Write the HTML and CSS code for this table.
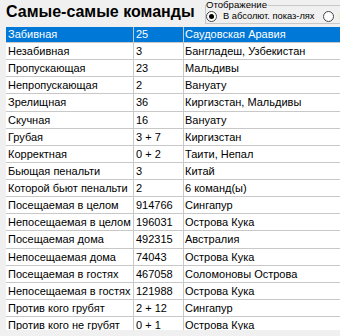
FILE: index.html
```html
<!DOCTYPE html>
<html lang="ru">
<head>
<meta charset="utf-8">
<title>Самые-самые команды</title>
<link rel="stylesheet" href="styles.css">
</head>
<body>
<div class="app">
  <header class="top">
    <h1 class="title">Самые-самые команды</h1>
    <div class="mode" role="radiogroup" aria-label="Отображение">
      <span class="legend">Отображение</span>
      <div class="opts">
        <label class="opt"><span class="radio on"></span>В абсолют. показ-лях</label>
        <label class="opt"><span class="radio"></span>В процентах</label>
      </div>
    </div>
  </header>
  <div class="grid">
    <div class="row sel"><div class="c c1">Забивная</div><div class="c c2">25</div><div class="c c3">Саудовская Аравия</div></div>
    <div class="row"><div class="c c1">Незабивная</div><div class="c c2">3</div><div class="c c3">Бангладеш, Узбекистан</div></div>
    <div class="row"><div class="c c1">Пропускающая</div><div class="c c2">23</div><div class="c c3">Мальдивы</div></div>
    <div class="row"><div class="c c1">Непропускающая</div><div class="c c2">2</div><div class="c c3">Вануату</div></div>
    <div class="row"><div class="c c1">Зрелищная</div><div class="c c2">36</div><div class="c c3">Киргизстан, Мальдивы</div></div>
    <div class="row"><div class="c c1">Скучная</div><div class="c c2">16</div><div class="c c3">Вануату</div></div>
    <div class="row"><div class="c c1">Грубая</div><div class="c c2">3 + 7</div><div class="c c3">Киргизстан</div></div>
    <div class="row"><div class="c c1">Корректная</div><div class="c c2">0 + 2</div><div class="c c3">Таити, Непал</div></div>
    <div class="row"><div class="c c1">Бьющая пенальти</div><div class="c c2">3</div><div class="c c3">Китай</div></div>
    <div class="row"><div class="c c1">Которой бьют пенальти</div><div class="c c2">2</div><div class="c c3">6 команд(ы)</div></div>
    <div class="row"><div class="c c1">Посещаемая в целом</div><div class="c c2">914766</div><div class="c c3">Сингапур</div></div>
    <div class="row"><div class="c c1">Непосещаемая в целом</div><div class="c c2">196031</div><div class="c c3">Острова Кука</div></div>
    <div class="row"><div class="c c1">Посещаемая дома</div><div class="c c2">492315</div><div class="c c3">Австралия</div></div>
    <div class="row"><div class="c c1">Непосещаемая дома</div><div class="c c2">74043</div><div class="c c3">Острова Кука</div></div>
    <div class="row"><div class="c c1">Посещаемая в гостях</div><div class="c c2">467058</div><div class="c c3">Соломоновы Острова</div></div>
    <div class="row"><div class="c c1">Непосещаемая в гостях</div><div class="c c2">121988</div><div class="c c3">Острова Кука</div></div>
    <div class="row"><div class="c c1">Против кого грубят</div><div class="c c2">2 + 12</div><div class="c c3">Сингапур</div></div>
    <div class="row"><div class="c c1">Против кого не грубят</div><div class="c c2">0 + 1</div><div class="c c3">Острова Кука</div></div>
  </div>
</div>
</body>
</html>
```
FILE: styles.css
```css
html, body {
  margin: 0;
  padding: 0;
  background: #f0f0f0;
  width: 340px;
  height: 336px;
  overflow: hidden;
}
body {
  font-family: "Liberation Sans", Arial, sans-serif;
  font-size: 11px;
  color: #000;
}
.app {
  width: 340px;
  height: 336px;
  overflow: hidden;
}
.top {
  display: flex;
  align-items: flex-start;
  height: 27px;
  overflow: hidden;
}
.title {
  margin: 0;
  padding: 3px 0 0 6px;
  flex: 0 0 205px;
  box-sizing: border-box;
  font-size: 16px;
  line-height: 18px;
  font-weight: bold;
  white-space: nowrap;
}
.mode {
  position: relative;
  flex: none;
  width: 220px;
  height: 19px;
  margin-top: 5px;
  box-sizing: border-box;
  border: 1px solid #c8c8c8;
  padding: 4px 0 0 0;
  font-size: 9.3px;
}
.legend {
  position: absolute;
  top: -6px;
  left: 0;
  line-height: 10px;
  padding-right: 1px;
  background: #f0f0f0;
  white-space: nowrap;
  font-size: 9.6px;
}
.opts {
  display: flex;
  height: 12px;
  align-items: center;
  white-space: nowrap;
}
.opt {
  display: inline-flex;
  align-items: center;
  margin-right: 8px;
  line-height: 12px;
}
.radio {
  width: 11px;
  height: 11px;
  box-sizing: border-box;
  border: 1px solid #444;
  border-radius: 50%;
  background: #fff;
  margin-right: 6px;
  display: inline-flex;
  align-items: center;
  justify-content: center;
  flex: none;
}
.radio.on::after {
  content: "";
  width: 5px;
  height: 5px;
  border-radius: 50%;
  background: #000;
}
.grid {
  margin-left: 6px;
  height: 303px;
  overflow: hidden;
  background: #fff;
}
.row {
  display: flex;
  height: 16.125px;
  line-height: 16px;
  border-bottom: 1px solid #c8c8c8;
}
.row.sel {
  height: 15px;
  line-height: 15px;
  background: #0078d7;
  color: #fff;
}
.c {
  box-sizing: border-box;
  white-space: nowrap;
  overflow: hidden;
  flex: none;
}
.c1 {
  width: 128px;
  padding-left: 2px;
  border-right: 1px solid #c8c8c8;
}
.c2 {
  width: 50px;
  padding-left: 2px;
  border-right: 1px solid #c8c8c8;
}
.c3 {
  flex: 1;
  padding-left: 1px;
}
```
